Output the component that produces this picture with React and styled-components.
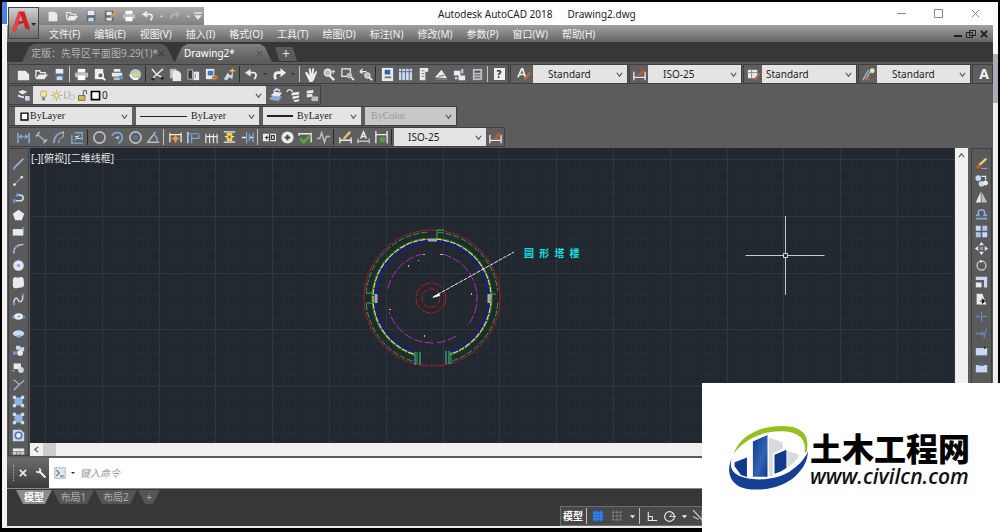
import React from 'react';
import styled, { createGlobalStyle } from 'styled-components';

const GlobalStyle = createGlobalStyle`
  * {
    box-sizing: border-box;
  }

  body {
    margin: 0;
    background: #000;
  }

  button,
  input,
  select {
    margin: 0;
    padding: 0;
    border: none;
    border-radius: 0;
    background: none;
    color: inherit;
    font: inherit;
  }
`;

const W = '#e9ecef';
const G = '#b9bec6';
const B = '#7fa6d6';
const L = '#c9d9f3';

// every drawing lives on a 16x16 grid
const icons = {
  new: <path d="M3 3h7l3 3v8H3z" fill={W} />,
  newWide: <path d="M2 4h8l4 4v6H2z" fill={W} />,
  open: <><path d="M2 12V4h4l1 2h5v2" fill="none" stroke={W} strokeWidth="1.4" /><path d="M2 13l3-5h10l-4 5z" fill={W} /></>,
  save: <><path d="M3 2h10v12H3z" fill="#5a6b80" /><path d="M4 2h8v5H4z" fill={W} /><path d="M5 10h6v4H5z" fill={L} /></>,
  saveAs: <><path d="M2 2h10v12H2z" fill="#5a6b80" /><path d="M4 3h6v4H4zM4 10h6v3H4z" fill={W} /><path d="M7 10l6-7 2 2-6 6z" fill="#e39a3b" /></>,
  print: <><path d="M4 2h8v4H4z" fill="#fff" /><path d="M1 6h14v5H1z" fill={G} /><path d="M4 9h8v5H4z" fill="#fff" /></>,
  preview: <><path d="M3 2h9v11H3z" fill={W} /><circle cx="9" cy="9" r="3" fill="#666" stroke="#fff" strokeWidth="1.4" /><path d="M11 11l3 3" stroke="#fff" strokeWidth="2" /></>,
  publish: <><path d="M4 2h7v3H4zM2 6h11v4H2z" fill={W} /><path d="M4 11h7v3H4z" fill={G} /><path d="M10 9h4v4h-4z" fill="#5d8fc9" /></>,
  globe: <><circle cx="8" cy="8" r="6" fill="#a9c7dd" /><path d="M3 5c3 4 5-2 6 2s-3 3-2 6M10 3l3 4-4 3z" fill="#e7cf7d" /><path d="M2 8c2 5 6 6 9 4" stroke="#fff" strokeWidth="2" fill="none" /></>,
  cut: <><path d="M2 2l5 6 6 3M14 2L7 8l-4 4" stroke={W} strokeWidth="1.6" fill="none" /><circle cx="3" cy="13" r="1.5" fill="#222" /><circle cx="13" cy="12" r="1.5" fill="#222" /></>,
  copy: <><path d="M2 2h7v10H2z" fill={G} /><path d="M5 4h6l3 3v8H5z" fill={W} /></>,
  paste: <><path d="M2 3h5v10H2z" fill="#3d3d3d" stroke={G} /><path d="M8 5h6v9H8z" fill={W} /><path d="M10 7v5" stroke="#888" /></>,
  match: <><path d="M2 2h9v11H2z" fill={W} /><path d="M4 4h6v5H4z" fill="#3f79bd" /><path d="M8 11l5-3 2 4-5 3z" fill="#c77a2e" /></>,
  block: <><path d="M2 13l4-7 3 3 3-3-1 7-3-2-3 3z" fill={L} /><path d="M11 1l1 2 3 1-3 1-1 3-1-3-3-1 3-1z" fill="#f0b840" /></>,
  undo: <><path d="M6 6h4c3 0 4 3 1 7" stroke={W} strokeWidth="2" fill="none" /><path d="M1 6l6-4v8z" fill={W} /></>,
  redo: <><path d="M10 6H6c-3 0-4 4-2 7" stroke={W} strokeWidth="3" fill="none" /><path d="M15 6L9 1v10z" fill={W} /></>,
  redoDim: <><path d="M10 6H6c-2 0-3 3-2 5" stroke="#b4b4b4" strokeWidth="2" fill="none" /><path d="M14 6l-5-4v8z" fill="#b4b4b4" /></>,
  hand: <path d="M1 6l2-1 3 4L5 2l2-1 1 6 1-6 2 1-1 6 3-4 1 1-3 8-2 3H6z" fill={W} />,
  zoomRt: <><circle cx="6" cy="6" r="3.6" fill={G} stroke={W} strokeWidth="1.4" /><path d="M8 9l5 5" stroke={W} strokeWidth="2.4" /><path d="M12 3v4M10 5h4" stroke={W} /></>,
  zoomWin: <><path d="M2 2h9v8H2z" fill="none" stroke={W} strokeWidth="1.3" /><circle cx="10" cy="9" r="3" fill={G} /><path d="M12 11l3 3" stroke={W} strokeWidth="2" /></>,
  zoomPrev: <><path d="M2 5h7M2 5l3-3M2 5l3 2" stroke={W} strokeWidth="1.4" /><circle cx="10" cy="9" r="3" fill={G} stroke={W} /><path d="M12 11l3 3" stroke={W} strokeWidth="2" /></>,
  props: <><path d="M2 1h12v14H2z" fill={W} /><path d="M5 3h6v5H5z" fill="#3465a8" /><path d="M5 11h7" stroke="#777" strokeWidth="2" /></>,
  center: <><path d="M1 2h14v12H1z" fill={L} /><path d="M4 2v12M8 2v12M12 2v12M1 5h14" stroke="#5e6570" /></>,
  palette: <><path d="M4 1h9v4h-3v9H4z" fill={W} /><path d="M6 4h3M6 7h3M6 10h3" stroke="#777" /></>,
  sheet: <><path d="M1 11l7-8 6 9z" fill={W} /><path d="M2 13h12M5 10l6-1" stroke="#888" strokeWidth="1.4" /></>,
  markup: <><path d="M2 4h7v5H2zM7 9h7v5H7z" fill={W} /><path d="M11 2v5M3 12h3" stroke={L} strokeWidth="2" /></>,
  calc: <><path d="M3 2h10v12H3z" fill={G} /><path d="M5 4h6v2H5zM5 8h6v1H5zM5 11h6v1H5z" fill="#555" /></>,
  textStyle: <><path d="M1 11L5 2h1l3 9M3 8h5" stroke={W} strokeWidth="1.8" fill="none" /><path d="M8 14l6-8" stroke="#b06a42" strokeWidth="3" /></>,
  dimStyle: <><path d="M2 5v9M14 5v9M2 11h12" stroke={W} strokeWidth="1.4" /><path d="M5 10l6-8 3 3-5 6z" fill="#a9613c" /></>,
  tblStyle: <><path d="M2 3h10v9H2z" fill={W} /><path d="M2 6h10M6 3v9" stroke="#888" /><path d="M8 13l6-7 1 2-4 7z" fill="#b5673c" /></>,
  mlStyle: <><path d="M2 14L8 3M5 13l5-8" stroke="#9db6d6" strokeWidth="1.4" /><circle cx="12" cy="4" r="2.6" fill="#efe3b4" /><path d="M4 13l5-4v6z" fill="#b5673c" /></>,
  layers: <><path d="M1 4l5-2 5 2-5 3zM1 7l5 2 4-2v2l-4 2-5-2z" fill={W} /><path d="M8 8h6v6H8z" fill={L} stroke="#555" /></>,
  layerCur: <><path d="M1 12l4-4 10 1-4 5z" fill="#86abd6" /><path d="M3 8l4-4 8 1-3 4z" fill={W} /><path d="M6 4l3-3 4 2" stroke={L} strokeWidth="2" fill="none" /></>,
  layerPrev: <><path d="M6 5l8-1v3l-8 1zM7 9l7-1v2l-7 2zM8 13l6-1v2l-5 1z" fill={W} /><path d="M1 4c1-3 5-3 6 0" stroke={W} fill="none" strokeWidth="1.5" /></>,
  layerState: <><path d="M3 3l7-1v3l-7 1zM3 7l6-1v3l-6 1z" fill={W} /><path d="M8 9h7v5H8z" fill={G} /></>,
  bulb: <><circle cx="8" cy="6" r="4" fill="#f0e39a" stroke="#b3a053" /><path d="M6 10h4v4H6z" fill="#8c8c8c" /></>,
  sun: <><circle cx="8" cy="8" r="3" fill="#f4e8a4" stroke="#a79a54" /><path d="M8 1v3M8 12v3M1 8h3M12 8h3M3 3l2 2M11 11l2 2M13 3l-2 2M5 11l-2 2" stroke="#b3a65c" /></>,
  freeze: <><path d="M2 2v9h5M5 4h3v5" stroke="#b5b5b5" fill="none" strokeWidth="1.4" /><circle cx="11" cy="10" r="3" fill="none" stroke="#b5b5b5" /></>,
  lock: <><path d="M3 8h8v6H3z" fill="#cdbb4e" stroke="#5e6b33" /><path d="M9 8V4c0-3 4-3 4 0v2" stroke="#666" strokeWidth="1.4" fill="none" /></>,
  swatch: <path d="M3 3h10v10H3z" fill="#fff" stroke="#000" strokeWidth="2" />,
  dimLin: <><path d="M2 3v11M14 3v11" stroke={B} strokeWidth="1.8" /><path d="M3 7h10M3 7l3-2v4zM13 7l-3-2v4z" stroke={B} fill={B} /></>,
  dimAlign: <><path d="M4 5l8 7" stroke={B} strokeWidth="1.8" /><path d="M2 7l4-5M10 14l4-4" stroke={G} strokeWidth="1.6" /></>,
  dimArc: <><path d="M2 14C2 7 7 2 13 3" stroke={B} strokeWidth="2" fill="none" /><path d="M7 14c0-4 2-6 6-7M12 1v6" stroke={G} fill="none" /></>,
  dimOrd: <><path d="M2 5v9h12M5 3h8M13 2v9M5 11l5-6" stroke={B} strokeWidth="1.5" fill="none" /><path d="M5 7h4M7 9h5" stroke={W} /></>,
  dimRad: <circle cx="8" cy="8" r="6" stroke={G} strokeWidth="1.8" fill="none" />,
  dimJog: <><path d="M2 6c3-5 11-4 11 2 0 3-2 5-4 6" stroke={B} strokeWidth="1.8" fill="none" /><path d="M5 8l5-2-1 4z" fill={G} /></>,
  dimDia: <><circle cx="8" cy="8" r="6" stroke={G} strokeWidth="1.8" fill="none" /><circle cx="8" cy="8" r="2.5" fill="#55749f" /></>,
  dimAng: <><path d="M10 2L2 13h12" stroke={G} strokeWidth="1.6" fill="none" /><path d="M7 5c4 0 5 4 5 8" stroke={B} strokeWidth="1.6" fill="none" /></>,
  quick: <><path d="M2 3v10M14 3v10M2 5h12" stroke={W} strokeWidth="1.4" /><path d="M8 5l2 3 3 1-3 1-2 4-2-4-3-1 3-1z" fill="#f29a35" /></>,
  base: <><path d="M2 2v12M6 5v9M14 5v4M2 4h12M6 9h8" stroke={B} strokeWidth="1.3" /><path d="M2 2v12" stroke={W} /></>,
  cont: <path d="M2 4v10M6 4v10M10 4v10M14 4v10M2 7h12" stroke={W} strokeWidth="1.2" />,
  space: <><path d="M2 2h12M2 13h12M3 7h10" stroke={W} strokeWidth="1.4" /><path d="M5 3h6v9H5z" fill="#f0d34c" /><path d="M7 6h2v3H7z" fill="#a64a30" /></>,
  brk: <><path d="M2 8h5M10 8h4" stroke={W} strokeWidth="1.5" /><path d="M7 2v12M10 4v8M14 3v10" stroke={B} strokeWidth="1.4" /></>,
  tol: <><path d="M1 4h14v8H1z" fill={W} /><path d="M3 8h4M5 6v4M8 4v8M10 6h3v4h-3z" stroke="#333" strokeWidth="1.3" fill="none" /></>,
  mark: <><circle cx="8" cy="8" r="6.5" fill={W} /><path d="M8 5v6M5 8h6" stroke="#444" strokeWidth="2" /></>,
  inspect: <><path d="M1 4h13M14 3v10M1 3v3" stroke={W} strokeWidth="1.4" /><path d="M2 9l4 4 7-7" stroke="#53a336" strokeWidth="3" fill="none" /></>,
  jog: <path d="M1 9h3l2-6 3 10 2-6h4" stroke={G} strokeWidth="1.6" fill="none" />,
  dimEdit: <><path d="M2 8v6M14 8v6M2 11h12" stroke={W} strokeWidth="1.5" /><path d="M5 9l7-8 2 2-7 7z" fill="#f0c069" /></>,
  dimText: <><path d="M5 9l3-7 3 7M6 7h4" stroke={W} strokeWidth="1.6" fill="none" /><path d="M2 9v5M14 9v5M2 12h12" stroke={G} strokeWidth="1.5" /></>,
  dimUpd: <><path d="M2 1v13M14 1v13M2 5h12" stroke={W} strokeWidth="1.4" /><circle cx="9" cy="10" r="3" fill="#5d9a3b" /></>,
  line: <><path d="M2 14L14 2" stroke="#aab4d4" strokeWidth="1.8" /><path d="M1 13h3v3H1z" fill="#6f93d2" /></>,
  cline: <><path d="M3 13L13 3" stroke="#8d95a3" strokeWidth="1.4" /><circle cx="3" cy="13" r="1.7" fill={W} /><circle cx="12" cy="4" r="1.7" fill={L} /></>,
  pline: <><path d="M2 12h8c5 0 5-7 0-7H6" stroke={L} strokeWidth="2" fill="none" /><path d="M1 10h4v4H1zM5 3h3v4H5z" fill="#6896cc" /></>,
  polygon: <path d="M8 2l7 5-3 8H4L1 7z" fill={W} />,
  rect: <><path d="M1 5h13v8H1z" fill={W} /><path d="M12 3h3v3h-3z" fill="#7c9ad0" /></>,
  arc: <><path d="M2 14C2 7 6 3 14 3" stroke="#b7c2e2" strokeWidth="1.8" fill="none" /><circle cx="5" cy="6" r="1.5" fill="#6f93d2" /></>,
  circle: <><circle cx="8" cy="8" r="6.5" fill="#dfe6f3" /><circle cx="8" cy="8" r="2" fill="#88a5dc" /></>,
  cloud: <path d="M2 2c2-1 4 0 6 0 2-1 5-1 6 1 1 2 0 4 1 6 0 4-2 6-5 5-2 0-3 1-5 1-4 0-4-3-4-5 1-3-1-5 1-8z" fill={W} />,
  spline: <><path d="M2 13c1-8 4-8 6-4s6 1 5-6" stroke="#c2cbe2" strokeWidth="2" fill="none" /><path d="M1 12h3v3H1zM12 1h3v3h-3z" fill="#6f93d2" /></>,
  ellipse: <><ellipse cx="8" cy="8" rx="6" ry="4" fill={W} /><path d="M0 7h3v3H0zM13 7h3v3h-3zM7 7h3v2H7z" fill="#5f97c8" /></>,
  earc: <><ellipse cx="8" cy="8" rx="7" ry="4" fill={L} /><path d="M6 10h5v3H6z" fill="#7fb0de" /></>,
  insert: <><path d="M5 2h5v5H5zM10 4h5v5h-5z" fill={L} /><circle cx="10" cy="11" r="3.5" fill={W} /><path d="M1 13V9h5v4z" fill="#6f9bd1" /></>,
  mkBlock: <><path d="M2 3h9v7H2z" fill={W} /><circle cx="11" cy="11" r="3.5" fill={L} /><path d="M0 11h3v2H0z" fill="#6f9bd1" /></>,
  point: <path d="M2 2l7 6 6-5M9 8l-7 7" stroke="#aeb5cc" strokeWidth="1.6" fill="none" />,
  hatch: <><path d="M3 3h10v10H3z" fill="#8ab4ea" /><path d="M1 1h4v4H1zM11 1h4v4h-4zM1 11h4v4H1zM11 11h4v4h-4z" fill={L} /></>,
  region: <><path d="M1 1h10l4 4v10H1z" fill={L} /><circle cx="8" cy="8" r="4" fill={W} stroke="#5577a8" strokeWidth="2" /></>,
  table: <><path d="M1 3h14v11H1z" fill={W} /><path d="M1 7h14M1 10h14M6 7v7M10 7v7" stroke="#667" /></>,
  erase: <><path d="M5 10l9-8" stroke="#eccb79" strokeWidth="3" /><path d="M1 13l3-5 4 4-5 3z" fill="#c9532a" /><path d="M8 14h7" stroke={G} /></>,
  copyObj: <><circle cx="4" cy="5" r="3.5" fill={L} /><circle cx="8" cy="12" r="3.5" fill={L} /><circle cx="13" cy="11" r="3" fill={W} /><path d="M8 3h5v4" stroke={W} fill="none" strokeWidth="1.5" /></>,
  mirror: <><path d="M7 1v13H1z" fill={W} /><path d="M8 1v13h7z" fill={G} /></>,
  offset: <path d="M4 9V6c0-5 8-5 8 0v3M1 13h14M1 9h5M10 9h5" stroke="#89a8de" strokeWidth="2" fill="none" />,
  array: <><path d="M1 1h6v6H1zM9 9h6v6H9z" fill={L} /><path d="M9 1h6v6H9zM1 9h6v6H1z" fill="#a9c5f2" /></>,
  move: <><path d="M8 0l3 4H5zM8 16l3-4H5zM0 8l4-3v6zM16 8l-4-3v6z" fill={W} /><path d="M6 6h4v4H6z" fill="#7f9ccb" /></>,
  rotate: <><circle cx="8" cy="8" r="5.5" stroke="#b6c2b4" strokeWidth="1.8" fill="none" /><path d="M6 1l4 2-4 2z" fill="#e2dcb4" /></>,
  scale: <><path d="M1 1h14v13h-4V5H1z" fill={L} /><path d="M1 8h7v6H1z" fill={W} /></>,
  stretch: <><path d="M2 1h7l5 13H2z" fill={W} /><path d="M6 10h5M9 7l3 3-3 3z" stroke="#111" fill="#111" /></>,
  trim: <path d="M1 8h5M9 8h6M8 2v12" stroke="#6288b8" strokeWidth="1.6" />,
  extend: <path d="M1 8h10M14 2l-3 12M8 6l3 2-3 2" stroke="#6288b8" strokeWidth="1.6" fill="none" />,
  breakPt: <><path d="M1 5h14v9H1z" fill={L} /><path d="M12 3v3" stroke="#333" strokeWidth="2" /></>,
  brkObj: <><path d="M1 5h14v9H1z" fill={L} /><path d="M5 3h6v3H5z" fill="#4a6da0" /></>,
  wrench: <path d="M5 1c3 0 4 3 3 5l7 7-2 2-7-7C4 9 1 8 1 5l3 1 2-2z" fill={W} />,
  close: <path d="M3 3l10 10M13 3L3 13" stroke={W} strokeWidth="2.8" />,
  caretDown: <path d="M2 5h12l-6 7z" fill={W} />,
  dot: <path d="M4 6h8l-4 4z" fill="#2a2a2a" />,
  dotLight: <path d="M4 6h8l-4 4z" fill="#ddd" />,
  custom: <><path d="M3 3h10v2H3z" fill={W} /><path d="M3 7h10l-5 6z" fill={W} /></>,
  prompt: <><path d="M1 1h14v14H1z" fill="#dfe6ec" stroke="#9aa7b3" /><path d="M3 4l4 4-4 4M8 12h5" stroke="#4c5b69" strokeWidth="1.4" fill="none" /></>,
  gridOn: <><path d="M1 1h14v14H1z" fill="#2458a8" /><path d="M4 1v14M8 1v14M12 1v14M1 4h14M1 8h14M1 12h14" stroke="#3a8dfa" strokeWidth="1.4" /></>,
  snap: <path d="M3 1v14M8 1v14M13 1v14M1 3h14M1 8h14M1 13h14" stroke="#b8b8b8" strokeDasharray="1 1" />,
  ortho: <path d="M4 2v11h11M4 8h5v5" stroke={W} strokeWidth="1.3" fill="none" />,
  polar: <><circle cx="8" cy="8" r="6" stroke={W} strokeWidth="1.4" fill="none" /><path d="M8 8h8M8 8l4-4" stroke={W} /></>,
  iso: <path d="M1 1l13 14M11 1v14M1 8l6 3" stroke={G} strokeWidth="1.4" />,
};

const names = {
  drawing: ['line', 'cline', 'pline', 'polygon', 'rect', 'arc', 'circle', 'cloud', 'spline', 'ellipse', 'earc', 'insert', 'mkBlock', 'point', 'hatch', 'hatch', 'region', 'table'],
  modify: ['erase', 'copyObj', 'mirror', 'offset', 'array', 'move', 'rotate', 'scale', 'stretch', 'trim', 'extend', 'breakPt', 'brkObj'],
  quick: ['new', 'open', 'save', 'saveAs', 'print', 'undo', 'dotLight', 'redoDim', 'dotLight', 'custom'],
  standard: ['newWide', 'open', 'save', '|', 'print', 'preview', 'publish', 'globe', '|', 'cut', 'copy', 'paste', 'match', 'block', '|', 'undo', 'dot', 'redo', 'dot', '|', 'hand', 'zoomRt', 'zoomWin', 'zoomPrev', '|', 'props', 'center', 'palette', 'sheet', 'markup', 'calc', '|', 'help'],
  dimension: ['dimLin', 'dimAlign', 'dimArc', 'dimOrd', '|', 'dimRad', 'dimJog', 'dimDia', 'dimAng', '|', 'quick', 'base', 'cont', 'space', 'brk', '|', 'tol', 'mark', 'inspect', 'jog', '|', 'dimEdit', 'dimText', 'dimUpd', '|'],
};

const quickWidths = { dotLight: 8, custom: 12 };

const menus = ['文件(F)', '编辑(E)', '视图(V)', '插入(I)', '格式(O)', '工具(T)', '绘图(D)', '标注(N)', '修改(M)', '参数(P)', '窗口(W)', '帮助(H)'];

const Screen = styled.div`
  position: relative;
  display: flex;
  height: 100vh;
  padding: 2px 2px 4px;
  background: #000;
  overflow: hidden;
  font-family: 'Noto Sans', 'Noto Sans CJK SC', sans-serif;
  font-size: 10px;
  line-height: 14px;
`;

const Desktop = styled.div`
  flex: none;
  width: 5px;
  background: linear-gradient(#4f7fe0 22px, #f2f2f2 22px);
`;

const PageScroll = styled.div`
  flex: none;
  width: 5px;
  background: linear-gradient(#fafafa 52px, #a9adb5 52px, #a9adb5 101px, #ececec 101px);
`;

const AppWindow = styled.div`
  flex: 1;
  min-width: 0;
  display: flex;
  flex-direction: column;
  background: #5c5c5c;
  border-bottom: 2px solid #e8e8e8;
`;

const Header = styled.header`
  flex: none;
  display: grid;
  grid-template-columns: 32px 1fr;
  grid-template-rows: 23px 17px;
  background: #fff;
`;

const AppButton = styled.button`
  grid-column: 1;
  grid-row: 1 / 3;
  z-index: 1;
  display: flex;
  align-items: center;
  margin: 5px 0 3px 1px;
  border: 1px solid #444;
  background: linear-gradient(#d0d0d0, #6b6b6b);
`;

const TitleRow = styled.div`
  grid-column: 2;
  grid-row: 1;
  display: flex;
  align-items: center;
`;

const QuickBar = styled.div`
  display: flex;
  align-items: center;
  align-self: flex-end;
  height: 18px;
  padding-left: 4px;
  background: linear-gradient(#adadad, #7f7f7f);
`;

const Title = styled.h1`
  flex: 1;
  display: flex;
  gap: 15px;
  margin: 0;
  padding-left: 234px;
  color: #222;
  font-size: 10px;
  font-weight: 400;
`;

const WindowButtons = styled.div`
  display: flex;
  gap: 26px;
  padding-right: 12px;
  color: #888;

  button {
    display: flex;
  }
`;

const MenuRow = styled.div`
  grid-column: 1 / 3;
  grid-row: 2;
  display: flex;
  align-items: center;
  padding-left: 42px;
  background: linear-gradient(#a2a2a2, #646464);
`;

const Menu = styled.nav`
  flex: 1;
  display: flex;
  gap: 14px;
  color: #f2f2f2;

  button {
    flex: none;
    white-space: nowrap;
  }
`;

const DocButtons = styled.div`
  display: flex;
  gap: 3px;
  padding-right: 4px;
  color: #222;

  button {
    display: flex;
  }
`;

const FileTabs = styled.div`
  flex: none;
  display: flex;
  align-items: flex-end;
  height: 20px;
  padding-left: 15px;
  background: #373737;
`;

const FileTab = styled.button`
  display: flex;
  align-items: center;
  justify-content: space-between;
  width: ${(p) => p.$width}px;
  height: 18px;
  padding: 0 9px;
  margin-right: 1px;
  background: ${(p) => (p.$active ? 'linear-gradient(#808080, #5c5c5c)' : '#585858')};
  color: ${(p) => (p.$active ? '#fff' : '#b4b4b4')};
  clip-path: polygon(0 100%, 7px 3px, 12px 0, calc(100% - 12px) 0, calc(100% - 7px) 3px, 100% 100%);
  white-space: nowrap;

  svg {
    flex: none;
  }
`;

const AddTab = styled.button`
  width: 22px;
  height: 14px;
  margin: 0 0 1px 2px;
  background: #5a5a5a;
  color: #ddd;
  font-size: 14px;
  line-height: 12px;
  clip-path: polygon(0 0, 80% 0, 100% 100%, 20% 100%);
`;

const Toolbars = styled.div`
  flex: none;
  display: flex;
  flex-direction: column;
  align-items: flex-start;
  gap: 1px;
  padding: 2px 0 1px 1px;
  overflow: hidden;
`;

const BarRow = styled.div`
  display: flex;
  gap: 1px;
`;

const Bar = styled.div`
  display: flex;
  align-items: center;
  height: 20px;
  padding-left: ${(p) => p.$pad || 0}px;
  border: 1px solid #3f3f3f;
  background: #5f5f5f;
`;

const Tool = styled.button`
  display: flex;
  flex: none;
  align-items: center;
  justify-content: center;
  width: ${(p) => p.$width || 18}px;
  height: 17px;
`;

const Separator = styled.span`
  flex: none;
  width: 1px;
  height: 16px;
  margin: 0 2px 0 1px;
  background: ${(p) => (p.$dark ? '#2a2a2a' : '#c4c4c4')};
`;

const Picker = styled.label`
  display: flex;
  align-items: center;
  width: ${(p) => p.$width}px;
  height: 18px;
  padding: 0 4px 0 ${(p) => p.$pad || 4}px;
  background: ${(p) => (p.$off ? '#c8c8c8' : '#e4e4e4')};
  color: ${(p) => (p.$off ? '#999' : '#1c1c1c')};
  font-family: ${(p) => (p.$serif ? "'Liberation Serif', serif" : 'inherit')};

  & + & {
    margin-left: 4px;
  }

  select {
    flex: 1;
    min-width: 0;
    appearance: none;
    opacity: 1;
    outline: none;
  }
`;

const Stroke = styled.span`
  width: ${(p) => p.$width}px;
  height: ${(p) => p.$weight}px;
  margin-right: 4px;
  background: #222;
`;

const HelpMark = styled.span`
  width: 11px;
  height: 12px;
  background: #eee;
  color: #222;
  font-weight: 700;
  line-height: 12px;
`;

const BigLetter = styled.span`
  color: #f4f4f4;
  font-size: 14px;
  font-weight: 700;
`;

const Workspace = styled.main`
  flex: 1;
  display: flex;
  min-height: 0;
  padding: 0 1px;
`;

const SideBar = styled.div`
  display: flex;
  flex-direction: column;
  align-items: center;
  width: 21px;
  padding-top: 6px;
  border: 1px solid #3f3f3f;
  background: #5a5a5a;
  overflow: hidden;
`;

const View = styled.div`
  flex: 1;
  min-width: 0;
  display: flex;
  flex-direction: column;
  margin-left: 1px;
`;

const Canvas = styled.div`
  flex: 1;
  position: relative;
  background: #212830;

  svg {
    position: absolute;
    width: 100%;
    height: 100%;
  }
`;

const ViewLabel = styled.div`
  position: absolute;
  top: 3px;
  left: 1px;
  color: #e6e6e6;
`;

const HScroll = styled.div`
  display: flex;
  align-items: center;
  height: 13px;
  background: #f0f0f0;

  button {
    display: flex;
    justify-content: center;
    width: 13px;
  }

  span {
    width: 13px;
    height: 13px;
    background: #cdcdcd;
  }
`;

const VScroll = styled.div`
  width: 13px;
  margin-right: 3px;
  padding-top: 4px;
  background: #f0f0f0;

  button {
    display: flex;
    justify-content: center;
    width: 13px;
  }
`;

const CommandLine = styled.div`
  flex: none;
  display: flex;
  align-items: center;
  height: 31px;
  margin-top: 2px;
  border-bottom: 1px solid #8a8a8a;
  background: #fff;
`;

const CommandTools = styled.div`
  align-self: stretch;
  display: flex;
  align-items: center;
  gap: 1px;
  width: 42px;
  margin-right: 2px;
  padding-left: 6px;
  background: linear-gradient(#6d6d6d, #3a3a3a);
`;

const Grip = styled.span`
  width: 1px;
  height: 16px;
  border-left: 1px dotted #aaa;
`;

const CommandInput = styled.input`
  flex: 1;
  min-width: 0;
  padding-left: 3px;
  color: #444;
  font-style: italic;
  outline: none;

  &::placeholder {
    color: #999;
    opacity: 1;
  }
`;

const Footer = styled.footer`
  flex: none;
  display: flex;
  flex-direction: column;
  height: 37px;
  background: #373737;
`;

const LayoutTabs = styled.div`
  display: flex;
  height: 15px;
  padding: 1px 0 0 9px;
`;

const LayoutTab = styled.button`
  width: ${(p) => p.$width}px;
  margin-right: 1px;
  background: ${(p) => (p.$active ? '#8c8c8c' : '#555')};
  color: ${(p) => (p.$active ? '#fff' : '#aaa')};
  font-weight: ${(p) => (p.$active ? 700 : 400)};
  clip-path: polygon(0 0, 100% 0, calc(100% - 7px) 100%, 7px 100%);
`;

const StatusBar = styled.div`
  display: flex;
  align-items: center;
  height: 20px;
  margin: 2px 0 0 553px;
  border: 1px solid #6e6e6e;
  background: #484848;
`;

const ModelButton = styled.button`
  width: 24px;
  color: #fff;
  font-weight: 700;
`;

const Brand = styled.aside`
  position: absolute;
  right: 0;
  bottom: 0;
  display: flex;
  align-items: center;
  width: 298px;
  height: 149px;
  padding-left: 25px;
  background: #fff;

  svg {
    flex: none;
  }
`;

const BrandText = styled.div`
  display: flex;
  flex-direction: column;
  padding-top: 4px;
  color: #000;

  strong {
    font-family: 'Noto Sans CJK SC', sans-serif;
    font-size: 32px;
    font-weight: 900;
    line-height: 32px;
    white-space: nowrap;
  }

  a {
    color: #111;
    font-family: 'Open Sans', sans-serif;
    font-size: 21px;
    font-style: italic;
    font-weight: 600;
    line-height: 26px;
    text-decoration: none;
  }
`;

function Icon({ name, size = 15 }) {
  return (
    <svg width={size} height={size} viewBox="0 0 16 16" aria-hidden="true">
      {icons[name]}
    </svg>
  );
}

function Chevron({ turn = 0 }) {
  return (
    <svg width="7" height="7" viewBox="0 0 8 8" aria-hidden="true">
      <path d="M1 2l3 4 3-4" fill="none" stroke="#555" strokeWidth="1.4" transform={`rotate(${turn} 4 4)`} />
    </svg>
  );
}

function TabClose({ color }) {
  return (
    <svg width="7" height="7" viewBox="0 0 7 7" aria-hidden="true">
      <path d="M1 1l5 5M6 1L1 6" stroke={color} />
    </svg>
  );
}

function Tools({ list }) {
  return list.map((name, i) => {
    if (name === '|') return <Separator key={i} $dark={i % 2 === 0} />;
    if (name === 'help') return <Tool key={i} aria-label="help"><HelpMark>?</HelpMark></Tool>;
    return (
      <Tool key={i} aria-label={name} $width={name === 'dot' ? 10 : 18}>
        <Icon name={name} size={name === 'dot' ? 8 : 15} />
      </Tool>
    );
  });
}

function Select({ label, value, children, ...rest }) {
  return (
    <Picker {...rest}>
      {children}
      <select aria-label={label} disabled={rest.$off} defaultValue={value}>
        <option>{value}</option>
      </select>
      <Chevron />
    </Picker>
  );
}

const CX = 402;
const CY = 150;

// angles in degrees, clockwise from the top
function arc(r, from, to) {
  const at = (deg) => {
    const a = (deg * Math.PI) / 180;
    return `${CX + r * Math.sin(a)} ${CY - r * Math.cos(a)}`;
  };
  return `M${at(from)}A${r} ${r} 0 ${to - from > 180 ? 1 : 0} 1 ${at(to)}`;
}

const GRID = 56.8;

function GridLines() {
  const lines = [];
  for (let i = 0; i < 180; i += 1) {
    const stroke = i % 5 === 0 ? '#2f3740' : '#242c35';
    const x = Math.round(15 + (i * GRID) / 5) + 0.5;
    const y = Math.round(11 + (i * GRID) / 5) + 0.5;
    lines.push(<line key={`v${i}`} x1={x} x2={x} y1="0" y2="100%" stroke={stroke} />);
    lines.push(<line key={`h${i}`} y1={y} y2={y} x1="0" x2="100%" stroke={stroke} />);
  }
  return <g>{lines}</g>;
}

function Drawing() {
  return (
    <svg role="img" aria-label="圆形塔楼">
      <GridLines />
      <g fill="none">
        <circle cx={CX} cy={CY} r="68" stroke="#c4161c" strokeDasharray="9 1" />
        <path d={`${arc(66, 5, 84)}${arc(66, 94, 163)}${arc(66, 197, 266)}${arc(66, 274, 356)}`} stroke="#1fae35" strokeDasharray="6 2" />
        <path d={`${arc(60, 6, 163)}${arc(60, 197, 354)}`} stroke="#23a13a" strokeDasharray="3 1" />
        <path d={`${arc(59, 4, 162)}${arc(59, 198, 356)}`} stroke="#e2e62c" strokeWidth="1.2" strokeDasharray="6 1" />
        <path d={`${arc(57, 4, 160)}${arc(57, 200, 356)}`} stroke="#1616b4" strokeWidth="1.6" />
        <path d={`${arc(45, 14, 128)}${arc(45, 148, 174)}${arc(45, 178, 252)}${arc(45, 282, 348)}`} stroke="#b02dbd" strokeDasharray="9 2" />
        <circle cx={CX - 1} cy={CY} r="15" stroke="#c2161c" strokeDasharray="10 2" />
        <circle cx={CX - 1} cy={CY} r="9" stroke="#c2161c" strokeDasharray="6 2" />
        <path d="M407 82v8M407 82h7M336 145h8M336 155h8M461 146h5M387 204v12M421 204v12" stroke="#22b83c" />
        <path d="M385 204v13M390 204v13M416 203v13M419 203v13" stroke="#3fc3c3" />
        <path d="M398 92h9" stroke="#a9a9b5" strokeWidth="3" />
        <path d="M346 146v9M459 146v9" stroke="#a9a9b5" strokeWidth="3" />
        <path d="M403 149L484 104" stroke="#e8e8e8" strokeDasharray="4 1" />
      </g>
      <path d="M402 150l7-5 1 3z" fill="#fff" />
      <path d="M393 106h2v1h-2zM410 106h3v1h-3zM378 117h1v2h-1zM388 112h1v1h-1zM359 161h2v1h-2zM394 187h1v2h-1zM441 145h1v2h-1z" fill="#c3c95f" />
      <text x="494" y="109" fill="#12e0e0" fontSize="10" fontWeight="700" xmlSpace="preserve">圆  形  塔  楼</text>
      <path d="M715.5 107.5h79M755.5 68v79" stroke="#c6c9d2" />
      <path d="M753.5 105.5h4v4h-4z" fill="#212830" stroke="#d5d8df" />
    </svg>
  );
}

function Logo() {
  return (
    <svg width="83" height="67" viewBox="560 130 250 200" aria-hidden="true">
      <defs>
        <linearGradient id="tower" x1="0" x2="1" y1="0" y2="1">
          <stop offset="0" stopColor="#123a8c" />
          <stop offset="0.6" stopColor="#2f64b4" />
          <stop offset="1" stopColor="#123a8c" />
        </linearGradient>
      </defs>
      <path d="M686 170L728 185V204L698 219V286H686zM742 210L778 222C770 240 757 252 742 260z" fill="#d9dadd" />
      <path d="M583 244L620 230V289L602 283L583 256z" fill="#123a8c" />
      <path d="M638 182L682 162V288H638z" fill="url(#tower)" />
      <path d="M703 222L739 207V262C728 270 715 276 703 279z" fill="#123a8c" />
      <path d="M580 219C600 160 665 134 730 135C788 136 812 165 799 216L794 214C800 172 772 152 725 151C665 150 612 176 580 219z" fill="#95c11f" />
      <path d="M574 233C560 264 564 300 598 318C642 336 722 326 765 287C790 263 802 242 804 211C794 236 768 263 735 280C690 302 622 300 592 283C572 271 568 255 574 233z" fill="#163f94" />
    </svg>
  );
}

function App() {
  return (
    <Screen>
      <GlobalStyle />
      <Desktop />
      <AppWindow>
        <Header>
          <AppButton aria-label="应用程序菜单">
            <svg width="30" height="28" viewBox="0 0 30 28">
              <path d="M3 22L10 2h6l6 19-5-1-2-6-6 2-2 7z" fill="#cf2127" />
              <path d="M10 12l2-6 2 6z" fill="#a5a5a5" />
              <path d="M3 22l7-20 2 3-5 18z" fill="#ea4145" />
              <path d="M23 14h5l-2.5 3z" fill="#222" />
            </svg>
          </AppButton>
          <TitleRow>
            <QuickBar>
              {names.quick.map((name, i) => (
                <Tool key={i} aria-label={name} $width={quickWidths[name] || 19}>
                  <Icon name={name} size={name === 'dotLight' ? 7 : 14} />
                </Tool>
              ))}
            </QuickBar>
            <Title>
              <span>Autodesk AutoCAD 2018</span>
              <span>Drawing2.dwg</span>
            </Title>
            <WindowButtons>
              <button aria-label="最小化"><svg width="11" height="11"><path d="M1 5.5h9" stroke="currentColor" /></svg></button>
              <button aria-label="最大化"><svg width="11" height="11"><path d="M1.5 1.5h8v8h-8z" stroke="currentColor" fill="none" /></svg></button>
              <button aria-label="关闭"><svg width="11" height="11"><path d="M2 2l7 7M9 2l-7 7" stroke="currentColor" /></svg></button>
            </WindowButtons>
          </TitleRow>
          <MenuRow>
            <Menu>
              {menus.map((m) => <button key={m}>{m}</button>)}
            </Menu>
            <DocButtons>
              <button aria-label="最小化图形"><svg width="10" height="10"><path d="M1 7h8" stroke="currentColor" strokeWidth="2" /></svg></button>
              <button aria-label="还原图形"><svg width="10" height="10"><path d="M3.5 1.5h6v5h-6zM.5 3.5h6v5h-6z" stroke="currentColor" fill="none" /></svg></button>
              <button aria-label="关闭图形"><svg width="10" height="10"><path d="M2 2l6 6M8 2L2 8" stroke="currentColor" strokeWidth="2" /></svg></button>
            </DocButtons>
          </MenuRow>
        </Header>

        <FileTabs>
          <FileTab $width={152}><span>定版：先导区平面图9.29(1)*</span><TabClose color="#333" /></FileTab>
          <FileTab $width={97} $active><span>Drawing2*</span><TabClose color="#444" /></FileTab>
          <AddTab aria-label="新图形">+</AddTab>
        </FileTabs>

        <Toolbars>
          <BarRow>
            <Bar $pad={5}><Tools list={names.standard} /></Bar>
            <Bar $pad={4}><Tool aria-label="文字样式"><Icon name="textStyle" /></Tool><Select label="文字样式" value="Standard" $width={94} $pad={15} /></Bar>
            <Bar><Tool aria-label="标注样式"><Icon name="dimStyle" /></Tool><Select label="标注样式" value="ISO-25" $width={93} $pad={15} /></Bar>
            <Bar><Tool aria-label="表格样式"><Icon name="tblStyle" /></Tool><Select label="表格样式" value="Standard" $width={94} /></Bar>
            <Bar><Tool aria-label="多重引线样式"><Icon name="mlStyle" /></Tool><Select label="多重引线样式" value="Standard" $width={93} $pad={15} /></Bar>
            <Bar $pad={3}><Tool $width={16} aria-label="多行文字"><BigLetter>A</BigLetter></Tool></Bar>
          </BarRow>
          <Bar $pad={6}>
            <Tool aria-label="图层特性"><Icon name="layers" /></Tool>
            <Select label="图层" value="0" $width={233}>
              {['bulb', 'sun', 'freeze', 'lock', 'swatch'].map((n) => <Icon key={n} name={n} size={13} />)}
            </Select>
            <Tool aria-label="置为当前"><Icon name="layerCur" /></Tool>
            <Tool aria-label="上一个图层"><Icon name="layerPrev" /></Tool>
            <Tool aria-label="图层状态"><Icon name="layerState" /></Tool>
          </Bar>
          <Bar $pad={6}>
            <Select label="颜色" value="ByLayer" $width={117} $serif><Icon name="swatch" size={11} /></Select>
            <Select label="线型" value="ByLayer" $width={123} $serif><Stroke $width={47} $weight={1} /></Select>
            <Select label="线宽" value="ByLayer" $width={98} $serif><Stroke $width={26} $weight={2} /></Select>
            <Select label="打印样式" value="ByColor" $width={91} $pad={6} $serif $off />
          </Bar>
          <Bar $pad={5}>
            <Tools list={names.dimension} />
            <Select label="标注样式控制" value="ISO-25" $width={92} $pad={14} />
            <Tool aria-label="标注样式"><Icon name="dimStyle" /></Tool>
          </Bar>
        </Toolbars>

        <Workspace>
          <SideBar>
            {names.drawing.map((n, i) => <Tool key={i} aria-label={n}><Icon name={n} size={13} /></Tool>)}
          </SideBar>
          <View>
            <Canvas>
              <Drawing />
              <ViewLabel>[-][俯视][二维线框]</ViewLabel>
            </Canvas>
            <HScroll><button aria-label="向左滚动"><Chevron turn={90} /></button><span /></HScroll>
          </View>
          <VScroll><button aria-label="向上滚动"><Chevron turn={180} /></button></VScroll>
          <SideBar>
            {names.modify.map((n) => <Tool key={n} aria-label={n}><Icon name={n} size={13} /></Tool>)}
          </SideBar>
        </Workspace>

        <CommandLine>
          <CommandTools>
            <Grip />
            <Tool $width={16} aria-label="关闭命令行"><Icon name="close" size={10} /></Tool>
            <Tool aria-label="自定义"><Icon name="wrench" size={12} /></Tool>
          </CommandTools>
          <Tool aria-label="最近的命令"><Icon name="prompt" size={12} /></Tool>
          <Tool $width={8} aria-label="命令列表"><Icon name="dot" size={8} /></Tool>
          <CommandInput aria-label="命令" placeholder="键入命令" />
        </CommandLine>

        <Footer>
          <LayoutTabs>
            <LayoutTab $width={36} $active>模型</LayoutTab>
            <LayoutTab $width={41}>布局1</LayoutTab>
            <LayoutTab $width={42}>布局2</LayoutTab>
            <LayoutTab $width={22} aria-label="新建布局">+</LayoutTab>
          </LayoutTabs>
          <StatusBar>
            <ModelButton>模型</ModelButton>
            <Separator />
            <Tool aria-label="栅格"><Icon name="gridOn" size={12} /></Tool>
            <Tool $width={19} aria-label="捕捉"><Icon name="snap" size={12} /></Tool>
            <Tool $width={12} aria-label="捕捉设置"><Icon name="caretDown" size={7} /></Tool>
            <Separator />
            <Tool aria-label="正交"><Icon name="ortho" size={13} /></Tool>
            <Tool aria-label="极轴"><Icon name="polar" size={13} /></Tool>
            <Tool $width={12} aria-label="极轴设置"><Icon name="caretDown" size={7} /></Tool>
            <Tool aria-label="等轴测"><Icon name="iso" /></Tool>
          </StatusBar>
        </Footer>
      </AppWindow>
      <PageScroll />
      <Brand>
        <Logo />
        <BrandText>
          <strong>土木工程网</strong>
          <a href="#civilcn">www.civilcn.com</a>
        </BrandText>
      </Brand>
    </Screen>
  );
}

export default App;
